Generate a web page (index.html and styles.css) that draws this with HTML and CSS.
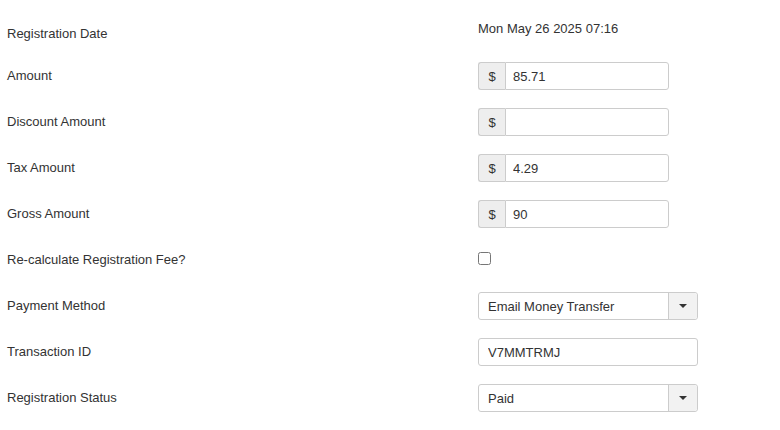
FILE: index.html
```html
<!DOCTYPE html>
<html>
<head>
  <title>Registration</title>
  <link rel="stylesheet" href="styles.css">
</head>
<body>

  <div class="form">
    <div class="row first">
      <label class="label">Registration Date</label>
      <div class="value static">Mon May 26 2025 07:16</div>
    </div>

    <div class="row">
      <label class="label">Amount</label>
      <div class="value">
        <div class="group">
          <span class="addon">$</span>
          <input type="text" class="field" value="85.71">
        </div>
      </div>
    </div>

    <div class="row">
      <label class="label">Discount Amount</label>
      <div class="value">
        <div class="group">
          <span class="addon">$</span>
          <input type="text" class="field" value="">
        </div>
      </div>
    </div>

    <div class="row">
      <label class="label">Tax Amount</label>
      <div class="value">
        <div class="group">
          <span class="addon">$</span>
          <input type="text" class="field" value="4.29">
        </div>
      </div>
    </div>

    <div class="row">
      <label class="label">Gross Amount</label>
      <div class="value">
        <div class="group">
          <span class="addon">$</span>
          <input type="text" class="field" value="90">
        </div>
      </div>
    </div>

    <div class="row">
      <label class="label" for="recalc">Re-calculate Registration Fee?</label>
      <div class="value">
        <input type="checkbox" id="recalc" class="check">
      </div>
    </div>

    <div class="row">
      <label class="label">Payment Method</label>
      <div class="value">
        <div class="select">
          <span class="select-text">Email Money Transfer</span>
          <span class="select-btn"><span class="caret"></span></span>
        </div>
      </div>
    </div>

    <div class="row">
      <label class="label">Transaction ID</label>
      <div class="value">
        <input type="text" class="text-input" value="V7MMTRMJ">
      </div>
    </div>

    <div class="row">
      <label class="label">Registration Status</label>
      <div class="value">
        <div class="select">
          <span class="select-text">Paid</span>
          <span class="select-btn"><span class="caret"></span></span>
        </div>
      </div>
    </div>
  </div>

</body>
</html>
```

FILE: styles.css
```css
body {
  margin: 0;
  font-family: "Liberation Sans", Arial, sans-serif;
  font-size: 13px;
  color: #333;
  background: #fff;
}

.form {
  padding: 16px 0 0 7px;
  display: flex;
  flex-direction: column;
  gap: 18px;
}

.row {
  display: flex;
  align-items: center;
  height: 28px;
}

.label {
  width: 471px;
  line-height: 20px;
}

.value {
  display: flex;
  align-items: center;
}

.row.first {
  align-items: flex-start;
}

.row.first .label {
  padding-top: 8px;
}

.row.first .static {
  padding-top: 3px;
  line-height: 20px;
}

.group {
  display: flex;
  width: 191px;
  height: 28px;
}

.addon {
  width: 26px;
  border: 1px solid #ccc;
  border-right: none;
  border-radius: 3px 0 0 3px;
  background: #eee;
  display: flex;
  align-items: center;
  justify-content: center;
}

.field {
  flex: 1;
  min-width: 0;
  border: 1px solid #ccc;
  border-radius: 0 3px 3px 0;
  padding: 0 7px;
  font: inherit;
  color: #333;
  box-sizing: border-box;
  outline: none;
}

.text-input {
  width: 220px;
  height: 28px;
  box-sizing: border-box;
  border: 1px solid #ccc;
  border-radius: 3px;
  padding: 0 9px;
  font: inherit;
  color: #333;
  outline: none;
}

.check {
  margin: -3px 0 0 0;
  width: 13px;
  height: 13px;
}

.select {
  display: flex;
  width: 220px;
  height: 28px;
  box-sizing: border-box;
  border: 1px solid #ccc;
  border-radius: 3px;
}

.select-text {
  flex: 1;
  padding-left: 9px;
  display: flex;
  align-items: center;
}

.select-btn {
  width: 28px;
  border-left: 1px solid #ccc;
  background: #f2f2f2;
  display: flex;
  align-items: center;
  justify-content: center;
  border-radius: 0 3px 3px 0;
}

.caret {
  width: 0;
  height: 0;
  border-left: 4px solid transparent;
  border-right: 4px solid transparent;
  border-top: 4px solid #333;
}
```
